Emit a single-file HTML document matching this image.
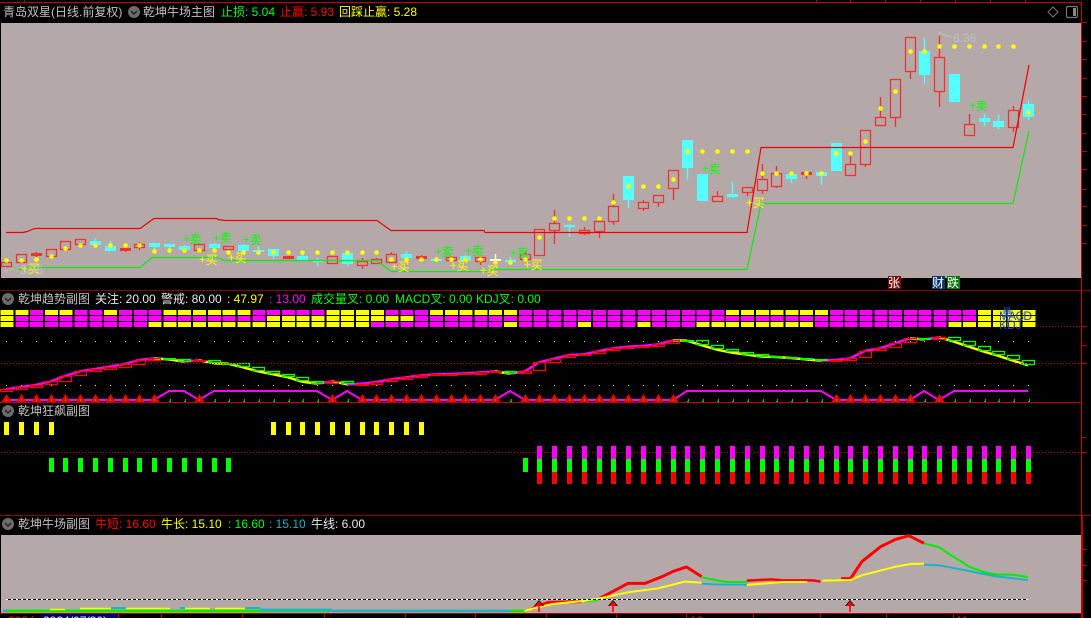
<!DOCTYPE html>
<html><head><meta charset="utf-8">
<style>
html,body{margin:0;padding:0;background:#000;width:1091px;height:618px;overflow:hidden}
#w{position:relative;width:1091px;height:618px;overflow:hidden;background:#000;font:12px/14px "Liberation Sans","WenQuanYi Zen Hei","Noto Sans CJK SC",sans-serif}
#w span{position:absolute;white-space:pre}
svg{position:absolute;left:0;top:0}
.g{color:#c0c0c0}.w{color:#e8e8e8}.gr{color:#0f0}.r{color:#f00}.y{color:#ff0}.m{color:#f0f}.c{color:#1ab4c8}
svg text{font-family:"WenQuanYi Zen Hei","Noto Sans CJK SC",sans-serif;font-size:12px}
</style></head><body>
<div id="w">
<svg id="s" width="1091" height="618" viewBox="0 0 1091 618" shape-rendering="crispEdges">
<rect x="1" y="23" width="1080" height="255" fill="#b4a9a8"/>
<rect x="1" y="535" width="1080" height="78" fill="#b4a9a8"/>
<rect x="0" y="2" width="1081" height="1" fill="#c80000"/>
<rect x="0" y="290" width="1091" height="1" fill="#8c0000"/>
<rect x="0" y="402" width="1081" height="1" fill="#c00000"/>
<rect x="0" y="515" width="1091" height="1" fill="#8c0000"/>
<rect x="0" y="613" width="1081" height="1" fill="#c00000"/>
<rect x="1081" y="2" width="1" height="514" fill="#d00000"/>
<rect x="1081" y="516" width="2" height="102" fill="#c00000"/>
<g id="main" shape-rendering="auto"></g>
<g shape-rendering="auto">
<polyline fill="none" stroke="#f00000" stroke-width="1.200" points="6,232.500 23,232.500 27,231.500 35,228.500 140,228.500 154,218.500 217,218.500 218,219.500 225,220.500 377,220.500 391,230.500 484,230.500 485,232.500 492,232.500 747,232.500 761,147.500 1013,147.500 1029,65"/>
<polyline fill="none" stroke="#10e810" stroke-width="1.200" points="8,269.500 23,269.500 25,267.500 140,267.500 152,257.500 217,257.500 225,260.500 377,260.500 391,271.500 491,271.500 492,269.500 747,269.500 761,203.500 1013,203.500 1029,131"/>
</g>
<g id="marks" shape-rendering="auto">
<text x="183" y="243" fill="#0f0">+卖</text><text x="213" y="242" fill="#0f0">+卖</text><text x="243" y="244" fill="#0f0">+卖</text><text x="435" y="256" fill="#0f0">+卖</text><text x="465" y="255" fill="#0f0">+卖</text><text x="510" y="257" fill="#0f0">+卖</text><text x="702" y="173" fill="#0f0">+卖</text><text x="969" y="110" fill="#0f0">+卖</text>
<text x="21" y="273" fill="#ff0">+买</text><text x="199" y="264" fill="#ff0">+买</text><text x="228" y="262" fill="#ff0">+买</text><text x="391" y="271" fill="#ff0">+买</text><text x="450" y="270" fill="#ff0">+买</text><text x="480" y="275" fill="#ff0">+买</text><text x="524" y="269" fill="#ff0">+买</text><text x="746" y="207" fill="#ff0">+买</text>
<text x="20" y="274" fill="#c4c4c4" style="font:12px 'Liberation Sans'">3.76</text>
<text x="953" y="42" fill="#c0c0c0" style="font:12px 'Liberation Sans'">6.36</text>
<path d="M6 267v4h2M7 269l12 1M939 32h3M939 32v4M939 33l12 4" stroke="#c0c0c0" fill="none"/>
</g>
<g id="dots" shape-rendering="auto"></g>
<rect x="888" y="276" width="13" height="13" fill="#7a0c0c"/><rect x="932" y="276" width="13" height="13" fill="#0b3a6e"/><rect x="947" y="276" width="13" height="13" fill="#0a780a"/>
<text x="888" y="287" fill="#fff">张</text><text x="932" y="287" fill="#fff">财</text><text x="947" y="287" fill="#fff">跌</text>
<g id="p2"></g>
<text x="999" y="320" fill="#1f40e6" style="font:12px 'Liberation Sans'" textLength="33">MACD</text>
<text x="999" y="329" fill="#1f40e6" style="font:12px 'Liberation Sans'">KDJ</text>
<text x="1002" y="316" fill="#1f40e6" style="font-size:10px">量</text>
<line x1="1" x2="1081" y1="363.5" y2="363.5" stroke="#c00000" stroke-dasharray="1 2"/>
<line x1="1037" x2="1081" y1="326.5" y2="326.5" stroke="#c00000" stroke-dasharray="1 2"/>
<line x1="1" x2="1081" y1="452.5" y2="452.5" stroke="#c00000" stroke-dasharray="1 2"/>
<g id="p3"></g>
<g shape-rendering="auto" stroke-linejoin="round" fill="none">
<path d="M3 611H7" stroke="#1ab4c8" stroke-width="2.700"/>
<path d="M7 611H330" stroke="#0e0" stroke-width="2.700"/>
<path d="M50 609.500H65M80 608.500H111M126 608.500H170M185 608.500H210M215 608.500H245" stroke="#ff0" stroke-width="1.500"/>
<path d="M111 608H126M180 608H185M245 608H260" stroke="#1ab4c8" stroke-width="2"/>
<path d="M260 610H332M332 611H510" stroke="#1ab4c8" stroke-width="2.700"/>
<path d="M510 611H526" stroke="#0e0" stroke-width="2.700"/>
<g transform="translate(500 430) scale(.3769 .3333)">
<polyline vector-effect="non-scaling-stroke" stroke="#f00" style="stroke-width:3px" points="85,537 100,528 130,517 215,515"/>
<polyline vector-effect="non-scaling-stroke" stroke="#0e0" style="stroke-width:2px" points="225,515 260,510"/>
<polyline vector-effect="non-scaling-stroke" stroke="#f00" style="stroke-width:3px" points="265,505 340,460 385,460 430,440 460,424 495,411 535,440"/>
<polyline vector-effect="non-scaling-stroke" stroke="#0e0" style="stroke-width:2px" points="535,442 580,452 600,456 655,456"/>
<polyline vector-effect="non-scaling-stroke" stroke="#f00" style="stroke-width:2.500px" points="655,452 720,448 750,451 830,451 850,455"/>
<polyline vector-effect="non-scaling-stroke" stroke="#0e0" style="stroke-width:2px" points="880,450 890,449"/>
<polyline vector-effect="non-scaling-stroke" stroke="#f00" style="stroke-width:3px" points="905,446 930,446 960,395 1010,350 1050,328 1085,317 1125,340"/>
<polyline vector-effect="non-scaling-stroke" stroke="#0e0" style="stroke-width:2px" points="1125,340 1165,352 1200,378 1245,410 1285,427 1320,434 1360,434 1400,441"/>
<polyline vector-effect="non-scaling-stroke" stroke="#ff0" style="stroke-width:2px" points="65,543 100,532 140,522 220,513 265,505 340,487 420,475 490,455 535,458"/>
<polyline vector-effect="non-scaling-stroke" stroke="#1ab4c8" style="stroke-width:2px" points="535,461 580,464 655,464"/>
<polyline vector-effect="non-scaling-stroke" stroke="#ff0" style="stroke-width:2px" points="655,465 750,456 815,456"/>
<polyline vector-effect="non-scaling-stroke" stroke="#ff0" style="stroke-width:2px" points="855,452 930,450 960,436 1050,410 1090,402 1125,401"/>
<polyline vector-effect="non-scaling-stroke" stroke="#1ab4c8" style="stroke-width:2px" points="1125,404 1165,406 1245,423 1310,438 1400,450"/>
</g>
</g>
<line x1="6" x2="1028" y1="599.5" y2="599.5" stroke="#000"/>
<line x1="6" x2="1028" y1="599.5" y2="599.5" stroke="#fff" stroke-dasharray="2 3"/>
<g shape-rendering="auto">
<path d="M539 600l5 6h-2v0h-6v0h-2z" fill="#000"/><path d="M539 601l4 5h-3.200v6h-1.600v-6H535z" fill="#f00"/>
<path d="M613 600l5 6h-2v0h-6v0h-2z" fill="#000"/><path d="M613 601l4 5h-3.200v6h-1.600v-6H609z" fill="#f00"/>
<path d="M850 600l5 6h-2v0h-6v0h-2z" fill="#000"/><path d="M850 601l4 5h-3.200v6h-1.600v-6H846z" fill="#f00"/>
</g>
<rect x="41" y="614" width="77" height="4" fill="#00006e"/>
<g id="ticks"></g>
<g shape-rendering="auto" fill="none" stroke="#777">
<path d="M1053 7l5 5-5 5-5-5z"/><rect x="1066.500" y="6.500" width="11" height="11" rx="1.500" stroke-width="1.200"/>
</g>
<rect x="1073" y="8" width="3" height="8" fill="#888"/>
<g id="ic" shape-rendering="auto">
<circle cx="134" cy="12" r="6" fill="#6c6c6c"/><path d="M131 11l3 3 3-3" stroke="#222" stroke-width="1.400" fill="none"/>
<circle cx="8" cy="299" r="6" fill="#6c6c6c"/><path d="M5 298l3 3 3-3" stroke="#222" stroke-width="1.400" fill="none"/>
<circle cx="8" cy="411" r="6" fill="#6c6c6c"/><path d="M5 410l3 3 3-3" stroke="#222" stroke-width="1.400" fill="none"/>
<circle cx="8" cy="524" r="6" fill="#6c6c6c"/><path d="M5 523l3 3 3-3" stroke="#222" stroke-width="1.400" fill="none"/>
</g>
</svg>

<span class="g" style="left:3px;top:5px">青岛双星(日线.前复权)</span>
<span class="g" style="left:143px;top:5px">乾坤牛场主图</span>
<span class="gr" style="left:221px;top:5px">止损: 5.04</span>
<span class="r" style="left:280px;top:5px">止赢: 5.93</span>
<span class="y" style="left:339px;top:5px">回踩止赢: 5.28</span>

<span class="g" style="left:18px;top:292px">乾坤趋势副图</span>
<span class="w" style="left:95px;top:292px">关注: 20.00</span>
<span class="w" style="left:161px;top:292px">警戒: 80.00</span>
<span class="y" style="left:227px;top:292px">: 47.97</span>
<span class="m" style="left:269px;top:292px">: 13.00</span>
<span class="gr" style="left:311px;top:292px">成交量叉: 0.00</span>
<span class="gr" style="left:395px;top:292px">MACD叉: 0.00</span>
<span class="gr" style="left:476px;top:292px">KDJ叉: 0.00</span>

<span class="g" style="left:18px;top:404px">乾坤狂飙副图</span>

<span class="g" style="left:18px;top:517px">乾坤牛场副图</span>
<span class="r" style="left:95px;top:517px">牛短: 16.60</span>
<span class="y" style="left:161px;top:517px">牛长: 15.10</span>
<span class="gr" style="left:228px;top:517px">: 16.60</span>
<span class="c" style="left:269px;top:517px">: 15.10</span>
<span class="w" style="left:311px;top:517px">牛线: 6.00</span>

<div style="position:absolute;left:0;top:614px;width:1081px;height:4px;overflow:hidden">
<span style="left:43px;top:0;color:#e8e8e8">2024/07/30)</span>
<span style="left:8px;top:0;color:#e02020">2024</span>
<span style="left:690px;top:0;color:#e02020">10</span>
<span style="left:956px;top:0;color:#e02020">11</span>
</div>
</div>
<script>
var X=function(i){return Math.round(6.2+14.81*i)};
function E(p,n,a){var e=document.createElementNS('http://www.w3.org/2000/svg',n);for(var k in a)e.setAttribute(k,a[k]);p.appendChild(e);return e}
var R=function(p,x,y,w,h,f){E(p,'rect',{x:x,y:y,width:w,height:h,fill:f})};
var C="r 262 266 262 268 260|r 254 262 254 262 260|R 253 255 252 256 259|r 249 256 249 256 256|r 241 249 241 249 248|r 239 244 239 244 245|c 241 244 238 246 245|c 246 250 241 250 245|R 248 250 247 251 245|r 244 247 242 249 245|c 243 246 243 252 251|c 244 246 243 250 250|c 246 249 245 250 250|r 244 250 244 252 250|c 244 247 243 250 250|r 246 249 246 250 252|c 245 250 244 252 252|c 250 251 246 254 252|c 249 255 249 258 252|R 256 258 256 258 252|c 256 259 253 260 252|c 260 261 258 265 252|r 256 263 256 263 252|c 253 263 253 265 252|r 261 265 258 268 252|r 259 263 258 263 252|r 254 262 252 262 259|c 254 257 251 258 259|R 256 258 255 259 259|c 259 260 257 261 259|r 257 260 256 260 259|c 256 260 255 260 259|r 257 261 257 264 259|w 259 260 254 261 262|c 260 261 257 264 262|r 254 259 252 259 259|r 229 255 229 255 237|r 223 230 210 243 218|c 225 226 224 236 218|r 230 233 227 234 218|r 221 231 221 237 218|r 206 221 194 224 202|c 176 199 176 207 186|r 202 208 200 210 186|r 195 202 195 206 186|r 170 188 170 199 179|c 140 167 140 179 151|c 174 200 174 200 151|r 196 201 191 201 151|c 194 196 182 197 151|r 187 192 187 195 151|r 179 190 164 193 173|r 173 186 166 187 173|c 174 178 174 182 173|R 172 174 172 178 173|c 172 175 172 184 173|c 143 170 143 170 153|r 164 175 153 175 153|r 130 164 130 166 141|r 117 125 97 125 108|r 79 117 79 126 91|r 37 71 37 78 51|c 51 74 38 83 51|r 57 91 35 106 46|c 74 101 74 101 46|r 124 135 114 135 46|c 118 121 114 125 46|c 121 126 115 128 46|r 110 127 106 131 46|c 104 116 100 119 112".split('|');
var mg=document.getElementById('main'),dg=document.getElementById('dots');
C.forEach(function(s,i){var a=s.split(' '),t=a[0],T=+a[1],B=+a[2],w=+a[3],b=+a[4],d=+a[5],x=X(i);
 var col=t=='c'?'#55ffff':t=='w'?'#fff':'#f03232';
 R(mg,x-.2,w,1.4,b-w+1,col);
 if(t=='r'){E(mg,'rect',{x:x-4.5,y:T+.5,width:10,height:B-T,fill:'#b4a9a8',stroke:col,'stroke-width':1.3})}
 else R(mg,x-5,T,11,B-T+1,col);
 E(dg,'circle',{cx:x+.5,cy:d+.5,r:2.3,fill:'#ff0'});
});
var i,c;
var rr3=[];for(i=0;i<70;i++){c='M';if(i==0||(i>=10&&i<=24)||i==34||i==39||i==43||i==47||i==48||(i>=49&&i<=54)||i>=64)c='Y';rr3.push(c)}
var rr1=[];for(i=0;i<70;i++){c='M';if([0,1,3,4,7,11,12,13,14,15,16,22,23,24,25,29,30,31,32,33,34,49,50,51,52,53,54,55,66,67,68,69].indexOf(i)>=0)c='Y';rr1.push(c)}
var rr2=[];for(i=0;i<70;i++){c='M';if(i==0||(i>=18&&i<=27)||i>=66)c='Y';rr2.push(c)}
var p2=document.getElementById('p2');
[[rr1,310],[rr2,316],[rr3,322]].forEach(function(r){for(var i=0;i<70;i++){R(p2,.5+14.81*i,r[1],13,5,r[0][i]=='Y'?'#ff0':'#f0f')}});
for(i=0;i<70;i++){R(p2,X(i),341,1,1,'#ddd');R(p2,X(i),385,1,1,'#ddd')}
var tri=[0,1,2,3,4,5,6,7,8,9,10,13,22,24,25,26,27,28,29,30,31,32,33,35,36,37,38,39,40,41,42,43,44,45,56,57,58,59,60,61,63];
var sg=E(p2,'g',{'shape-rendering':'auto'});
var ps=[];for(i=0;i<70;i++){ps.push(X(i)+','+(tri.indexOf(i)>=0?400:391))}
E(sg,'polyline',{points:ps.join(' '),fill:'none',stroke:'#f0f','stroke-width':2});
for(i=0;i<70;i++){
 if(tri.indexOf(i)>=0){E(sg,'path',{d:'M'+(X(i)+.5)+' 394l5 8h-10z',fill:'#f00000'});R(p2,X(i),399,1,2,'#0c0')}
 else{R(p2,X(i)+1,399,1,3,'#0c0');R(p2,X(i),401,1,1,'#0c0')}
}
var K="r 313 314|r 306 314|r 300 308|r 289 302|r 273 290|r 259 275|r 252 260|r 245 254|r 237 248|r 225 239|r 220 227|G 220 223|g 223 230|R 226 230|g 226 235|G 234 236|g 235 247|g 247 259|g 259 268|g 268 277|g 277 290|g 289 296|r 289 295|g 289 298|R 296 298|r 291 299|r 283 292|r 277 284|r 271 278|R 268 270|R 267 269|R 265 267|r 262 268|R 259 262|g 259 266|r 259 265|r 232 260|r 221 233|r 210 220|R 208 210|r 198 208|r 190 200|R 185 187|R 183 185|r 178 184|r 166 178|G 165 167|g 166 181|g 181 194|g 193 203|g 202 209|g 208 215|G 213 216|G 216 219|G 220 223|G 223 227|R 225 227|r 220 227|r 198 220|r 190 200|r 175 190|r 160 176|G 159 163|r 157 163|g 157 170|g 169 185|g 184 200|g 199 212|g 211 227|g 226 241".split('|').map(function(s){var a=s.split(' ');return [a[0],285+a[1]/3,285+a[2]/3]});
var vals=K.map(function(k,i){var up=k[0]=='r'||k[0]=='R';return up?k[1]:k[2]});
var tg=E(p2,'g',{'shape-rendering':'auto'});
for(i=1;i<70;i++){var up=vals[i]<vals[i-1];E(tg,'line',{x1:X(i-1),y1:vals[i-1],x2:X(i),y2:vals[i],stroke:up?'#f0f':'#ff0','stroke-width':2.5})}
K.forEach(function(k,i){var col=(k[0]=='r'||k[0]=='R')?'#f00':'#0f0';var x=X(i);
 if(k[0]=='r'||k[0]=='g'){E(tg,'rect',{x:x-5.5,y:Math.round(k[1])+.5,width:12,height:Math.max(2,Math.round(k[2]-k[1])-1),fill:'none',stroke:col,'stroke-width':1.3})}
 else R(p2,x-6,Math.round(k[1]),13,2,col)});
var p3=document.getElementById('p3');
[0,1,2,3,18,19,20,21,22,23,24,25,26,27,28].forEach(function(i){R(p3,X(i)-2,422,5,13,'#ff0')});
for(i=3;i<=15;i++)R(p3,X(i)-2,458,5,14,'#0f0');
R(p3,X(35)-2,458,5,14,'#0f0');
for(i=36;i<70;i++){R(p3,X(i)-2,446,5,13,'#f0f');R(p3,X(i)-2,459,5,13,'#0f0');R(p3,X(i)-2,472,5,12,'#f00')}
var tk=document.getElementById('ticks');
[22,41,59,78,96,114,133,151,169,189,206,225,243,326,345,363,437,452,549,565,580].forEach(function(y){R(tk,1081,y,6,1,'#c00000')});
[816,850,885,920,955,990,1025,24].forEach(function(x){R(tk,x,0,1,2,'#c00000')});
[118,161,242,324,405,475,546,616,686,753,820,886,953].forEach(function(x){R(tk,x,614,1,4,'#c00000')});
</script>
</body></html>
